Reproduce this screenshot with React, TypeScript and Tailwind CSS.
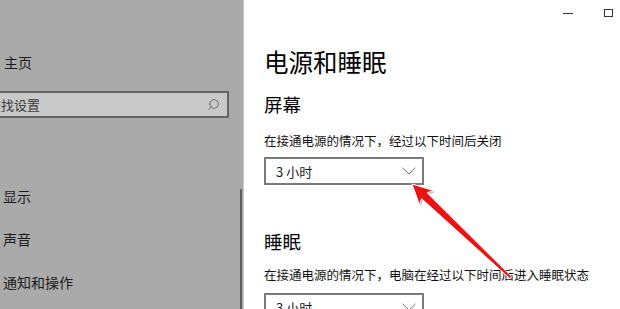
import { Search } from 'lucide-react';

const font = { fontFamily: '"Noto Sans CJK SC", "Noto Sans", sans-serif' };

const Dropdown = ({ value }: { value: string }) => (
  <div className="w-[160px] h-[28px] border-2 border-[#7a7a7a] bg-white flex items-center pl-[10px] pr-[6px]">
    <span className="text-[13px] leading-none text-[#1a1a1a]">{value}</span>
    <svg width="14" height="8" viewBox="0 0 14 8" className="ml-auto">
      <polyline points="0.5,0.8 7,7 13.5,0.8" fill="none" stroke="#6f6f6f" strokeWidth="1" />
    </svg>
  </div>
);

const NavItem = ({ label }: { label: string }) => (
  <div className="h-[43px] shrink-0 flex items-center pl-[3px] text-[14px] leading-none text-[#1c1c1c]">{label}</div>
);

export default function App() {
  return (
    <div className="relative w-[620px] h-[309px] overflow-hidden flex bg-white" style={font}>
      {/* 左侧导航 (遮罩后的灰色) */}
      <div className="relative w-[244px] h-full shrink-0 bg-[#aaaaaa] border-r border-[#c6c6c6] flex flex-col">
        <div className="h-[40px] shrink-0" />
        <div className="h-[43px] shrink-0 flex items-center pl-[4px] text-[14px] leading-none text-[#1c1c1c]">主页</div>
        <div className="h-[8px] shrink-0" />
        <div className="ml-[-22px] w-[251px] h-[27px] shrink-0 border-2 border-[#656565] bg-[#c9c9c9] flex items-center pl-[8px] pr-[7px]">
          <span className="text-[13px] leading-none text-[#3a3a3a]">查找设置</span>
          <Search size={13} strokeWidth={1.4} className="ml-auto text-[#555] -scale-x-100" />
        </div>
        <div className="h-[56px] shrink-0" />
        <NavItem label="显示" />
        <NavItem label="声音" />
        <NavItem label="通知和操作" />
        {/* 滚动条 */}
        <div className="absolute right-[1px] top-[189px] bottom-0 w-[2px] bg-[#5f5f5f]" />
      </div>

      {/* 右侧内容 */}
      <div className="flex-1 pl-[20px]">
        <div className="h-[30px] flex items-start justify-end pr-[7px] pt-[9px] gap-[31px]">
          <div className="w-[10px] h-[1px] bg-[#333] mt-[4px]" />
          <div className="w-[9px] h-[8px] border border-[#333]" />
        </div>
        <h1 className="mt-[17px] text-[24.5px] leading-[30px] text-black font-normal">电源和睡眠</h1>
        <h2 className="mt-[15px] text-[18.5px] leading-[24px] text-black">屏幕</h2>
        <p className="mt-[16px] text-[12.5px] leading-[18px] text-[#111]">在接通电源的情况下，经过以下时间后关闭</p>
        <div className="mt-[7px]">
          <Dropdown value="3 小时" />
        </div>
        <h2 className="mt-[44px] text-[18.5px] leading-[24px] text-black">睡眠</h2>
        <p className="mt-[13px] text-[12.5px] leading-[18px] text-[#111]">在接通电源的情况下，电脑在经过以下时间后进入睡眠状态</p>
        <div className="mt-[9px]">
          <Dropdown value="3 小时" />
        </div>
      </div>

      {/* 红色箭头标注 */}
      <svg className="absolute inset-0 pointer-events-none" width="620" height="309" viewBox="0 0 620 309">
        <polygon
          points="413.5,185.5 434.9,192 428.6,194.3 513.1,278.2 511.3,280 423,200.1 421.1,206.6"
          fill="#7d7d7d"
          opacity="0.5"
        />
        <polygon
          points="412,184 433.4,190.5 427.1,192.8 511.6,276.7 509.8,278.5 421.5,198.6 419.6,205.1"
          fill="#ee1111"
          stroke="#ffffff"
          strokeWidth="1"
          strokeLinejoin="round"
        />
      </svg>
    </div>
  );
}
